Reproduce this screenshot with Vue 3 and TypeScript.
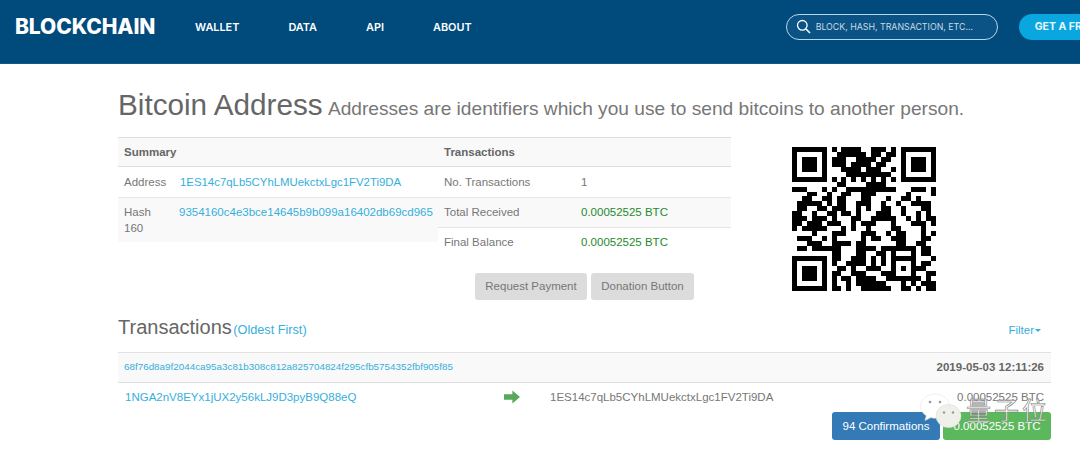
<script setup lang="ts">
const qrRows: string[] = [
  "11111110101111001110101111111",
  "10000010011111101101101000001",
  "10111010111001111011001011101",
  "10111010111011110110001011101",
  "10111010001111011100101011101",
  "10000010000111111111001000001",
  "11111110101010101010101111111",
  "00000000011000011110000000000",
  "11100010100111111111100011101",
  "00011001001100111000000100001",
  "00110011011000110001001101000",
  "01111101011001110010010011110",
  "01100110111001010011001000110",
  "11001001101101000111001001010",
  "11101110100011001111100101011",
  "11011101110010111000100011101",
  "10111110001010010000110000100",
  "00001000111000111001011000101",
  "01110010100000101100111000110",
  "00011100111101100000011001100",
  "01101111110001111011111110110",
  "00000000110001100110100010110",
  "11111110110011101010111110001",
  "10000010100111101010100010110",
  "10111010011010011100101011100",
  "10111010110011100011100010011",
  "10111010101101111001111111010",
  "10000010100101111110001010111",
  "11111110110100111111001101011"
];
const cells = qrRows.flatMap((row, y) =>
  [...row].flatMap((c, x) => (c === "1" ? [{ x, y }] : []))
);
const nav = ["WALLET", "DATA", "API", "ABOUT"];
</script>

<template>
  <div class="page">
    <header class="top">
      <div class="logo">BLOCKCHAIN</div>
      <nav class="nav">
        <a v-for="n in nav" :key="n">{{ n }}</a>
      </nav>
      <div class="search">
        <svg width="15" height="15" viewBox="0 0 15 15" fill="none" stroke="#fff" stroke-width="1.3">
          <circle cx="6.3" cy="6.3" r="4.8" />
          <path d="M10 10l4 4" stroke-width="1.6" />
        </svg>
        <span>BLOCK, HASH, TRANSACTION, ETC...</span>
      </div>
      <div class="cta">GET A FREE WALLET</div>
    </header>

    <main class="main">
      <h1 class="title">Bitcoin Address <small>Addresses are identifiers which you use to send bitcoins to another person.</small></h1>

      <section class="summary">
        <div class="left">
          <div class="thead">Summary</div>
          <div class="lrow">
            <span class="lbl">Address</span>
            <a class="link val addr">1ES14c7qLb5CYhLMUekctxLgc1FV2Ti9DA</a>
          </div>
          <div class="lrow striped tight">
            <span class="lbl">Hash 160</span>
            <a class="link val hash">9354160c4e3bce14645b9b099a16402db69cd965</a>
          </div>
        </div>
        <div class="right">
          <div class="thead">Transactions</div>
          <div class="rrow"><span class="rlbl">No. Transactions</span><span>1</span></div>
          <div class="rrow striped"><span class="rlbl">Total Received</span><span class="green">0.00052525 BTC</span></div>
          <div class="rrow"><span class="rlbl">Final Balance</span><span class="green">0.00052525 BTC</span></div>
          <div class="actions">
            <button class="grey">Request Payment</button>
            <button class="grey">Donation Button</button>
          </div>
        </div>
        <svg class="qr" width="143.5" height="143.5" viewBox="0 0 29 29" shape-rendering="crispEdges">
          <rect v-for="c in cells" :key="c.x + '-' + c.y" :x="c.x" :y="c.y" width="1" height="1" fill="#000" />
        </svg>
      </section>

      <div class="txhead">
        <h2 class="txtitle">Transactions <a class="link">(Oldest First)</a></h2>
        <a class="link filter">Filter<i class="caret"></i></a>
      </div>

      <div class="txbar">
        <a class="link txhash">68f76d8a9f2044ca95a3c81b308c812a825704824f295cfb5754352fbf905f85</a>
        <b class="date">2019-05-03 12:11:26</b>
      </div>
      <div class="txrow">
        <a class="link from">1NGA2nV8EYx1jUX2y56kLJ9D3pyB9Q88eQ</a>
        <svg class="arrow" width="16" height="14" viewBox="0 0 16 14">
          <path d="M0 4.2h8.4V0.4L16 7l-7.6 6.6V9.8H0z" fill="#57a85a" />
        </svg>
        <span class="to">1ES14c7qLb5CYhLMUekctxLgc1FV2Ti9DA</span>
        <span class="amt">0.00052525 BTC</span>
      </div>
      <div class="badges">
        <button class="blue">94 Confirmations</button>
        <button class="okay">0.00052525 BTC</button>
      </div>
    </main>

    <div class="mark">
      <svg class="bubbles" width="42" height="36" viewBox="0 0 42 36">
        <path d="M15 1C7 1 .5 6.500 .5 13c0 4 2.300 7.500 5.800 9.800L5 27.500l5.800-2.900c1.400.4 2.800.6 4.200.6 8 0 14.500-5.500 14.500-12.200S23 1 15 1z" fill="#fff" stroke="#e4e4e4" stroke-width=".6" />
        <circle cx="10" cy="9" r="1.300" fill="#999" />
        <circle cx="20" cy="9" r="1.300" fill="#999" />
        <ellipse cx="28.500" cy="23" rx="12.500" ry="11.500" fill="#f0f0ea" stroke="#dcdcdc" stroke-width=".6" />
        <circle cx="24" cy="19.500" r="1.200" fill="#999" />
        <circle cx="33" cy="19.500" r="1.200" fill="#999" />
      </svg>
      <span class="mtext">量子位</span>
    </div>
  </div>
</template>

<style scoped>
.page {
  position: relative;
  width: 1080px;
  height: 460px;
  overflow: hidden;
  background: #fff;
  font-family: "Liberation Sans", Arial, sans-serif;
  font-size: 11.5px;
  line-height: 16px;
  color: #777;
}
.top {
  display: flex;
  align-items: center;
  height: 63px;
  padding: 0 0 0 15px;
  background: #004a7c;
  border-bottom: 1px solid #0f5c8c;
  white-space: nowrap;
}
.top > * {
  flex-shrink: 0;
}
.logo {
  width: 140px;
  margin-top: -9px;
  font-family: Inter, sans-serif;
  font-weight: 800;
  font-size: 21px;
  letter-spacing: -0.1px;
  color: #fff;
}
.nav {
  display: flex;
  gap: 49px;
  margin-left: 40px;
  margin-top: -9px;
  font-family: Inter, sans-serif;
  font-weight: 600;
  font-size: 10.9px;
  color: #fff;
}
.search {
  display: flex;
  align-items: center;
  gap: 5px;
  box-sizing: border-box;
  width: 212px;
  height: 26px;
  margin-left: 314px;
  margin-top: -10px;
  padding-left: 9px;
  border: 1px solid #b6d6ea;
  border-radius: 13px;
  background: #0a5384;
  font-family: Inter, sans-serif;
  font-size: 8.8px;
  color: #c8dae8;
}
.cta {
  box-sizing: border-box;
  width: 160px;
  height: 26px;
  margin-left: 21px;
  margin-top: -10px;
  padding-left: 16px;
  border-radius: 13px;
  background: #0aa6e0;
  font-family: Inter, sans-serif;
  font-weight: 700;
  font-size: 10.5px;
  line-height: 26px;
  color: #eaf6fc;
}
.main {
  box-sizing: border-box;
  width: 1051px;
  padding-left: 118px;
}
.title {
  margin: 20px 0 8px;
  font-weight: 400;
  font-size: 29.7px;
  line-height: 41px;
  color: #666;
  white-space: nowrap;
}
.title small {
  margin-left: -3px;
  font-size: 19.15px;
  color: #777;
}
.summary {
  display: flex;
  align-items: flex-start;
}
.left {
  width: 320px;
}
.right {
  width: 293px;
}
.thead {
  box-sizing: border-box;
  height: 30px;
  padding: 0 6px;
  border-top: 1px solid #ddd;
  border-bottom: 1px solid #ddd;
  background: #f9f9f9;
  font-weight: 700;
  line-height: 28px;
  color: #666;
}
.lrow {
  display: flex;
  box-sizing: border-box;
  padding: 7px 0 7px 6px;
  min-height: 30px;
}
.lrow + .lrow {
  border-top: 1px solid #e6e6e6;
}
.tight {
  padding: 6px 0 6px 6px;
}
.lbl {
  flex: 0 0 44px;
  margin-right: 12px;
}
.val {
  white-space: nowrap;
}
.addr {
  font-size: 11.4px;
}
.hash {
  margin-left: -1px;
  font-size: 11.5px;
}
.striped {
  background: #f9f9f9;
}
.rrow {
  display: flex;
  box-sizing: border-box;
  height: 30px;
  padding: 0 6px;
  align-items: center;
}
.rrow + .rrow {
  border-top: 1px solid #e6e6e6;
  padding-bottom: 2px;
}
.rlbl {
  width: 137px;
}
.green {
  color: #1f8a2b;
}
.link {
  color: #36afdc;
}
.actions {
  display: flex;
  justify-content: center;
  gap: 4px;
  margin-top: 16px;
}
button {
  height: 27px;
  padding: 0;
  border: 0;
  border-radius: 3px;
  font-family: "Liberation Sans", Arial, sans-serif;
  font-size: 11.5px;
}
.grey {
  padding-bottom: 2px;
  background: #dcdcdc;
  color: #777;
}
.grey:first-child {
  width: 112px;
}
.grey:last-child {
  width: 103px;
}
.qr {
  flex-shrink: 0;
  margin-left: 61px;
  margin-top: 10px;
}
.txhead {
  display: flex;
  justify-content: space-between;
  align-items: center;
  height: 28px;
  margin-top: 14px;
  padding-right: 10px;
}
.txtitle {
  margin: 0;
  font-weight: 400;
  font-size: 20px;
  color: #666;
}
.txtitle .link {
  margin-left: -4px;
  font-size: 12.7px;
}
.filter {
  margin-top: 3px;
}
.caret {
  display: inline-block;
  margin-left: 1px;
  vertical-align: middle;
  border-top: 3px solid #36afdc;
  border-left: 3px solid transparent;
  border-right: 3px solid transparent;
}
.txbar {
  display: flex;
  justify-content: space-between;
  align-items: center;
  box-sizing: border-box;
  height: 31px;
  margin-top: 10px;
  padding: 0 7px 2px 6px;
  border-top: 1px solid #e2e2e2;
  border-bottom: 1px solid #dedede;
  background: #f9f9f9;
}
.txhash {
  font-size: 9.85px;
}
.date {
  color: #666;
}
.txrow {
  display: flex;
  align-items: center;
  height: 27px;
  padding: 0 7px 2px 0;
}
.from {
  width: 379px;
  margin-left: 7px;
}
.arrow {
  margin-top: 1px;
}
.to {
  margin-left: 30px;
}
.amt {
  margin-left: auto;
}
.badges {
  display: flex;
  justify-content: flex-end;
  gap: 3px;
}
.badges button {
  width: 108px;
  height: 28px;
  color: #fff;
}
.blue {
  background: #337ab7;
}
.okay {
  background: #5cb85c;
}
.mark {
  position: absolute;
  left: 920px;
  top: 393px;
  display: flex;
  align-items: center;
  gap: 4px;
}
.bubbles {
  flex-shrink: 0;
}
.mtext {
  margin-top: -4px;
  font-family: "Noto Sans CJK SC", sans-serif;
  font-size: 25px;
  line-height: 30px;
  letter-spacing: 3px;
  color: rgba(255, 255, 255, 0.7);
  -webkit-text-stroke: 0.6px #7c7c7c;
}
</style>

<style>
body { margin: 0; }
</style>
